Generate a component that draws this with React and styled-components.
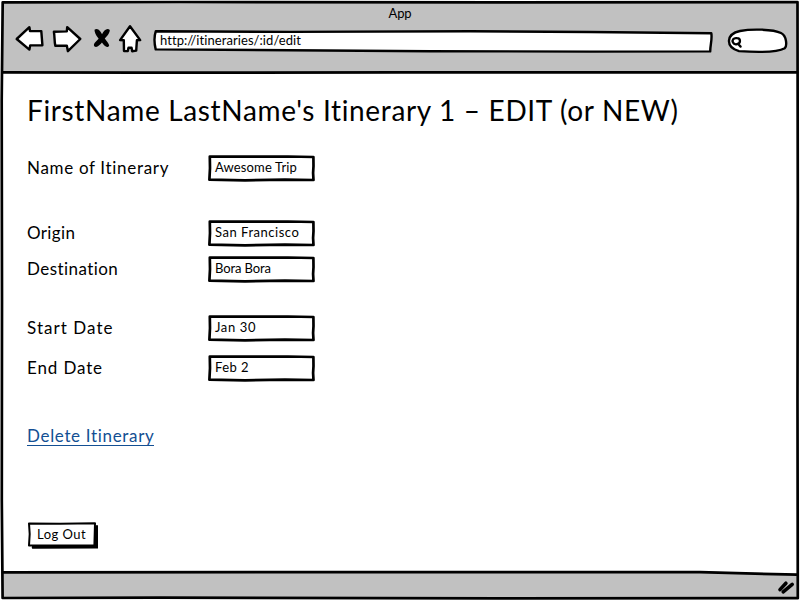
import React from 'react';
import styled, { createGlobalStyle } from 'styled-components';

const GlobalStyle = createGlobalStyle`
  *, *::before, *::after { box-sizing: border-box; }
  body { margin: 0; background: #fff; color: #000; font-family: Lato, "Open Sans", sans-serif; }
`;

const Window = styled.div`
  position: relative;
  display: flex;
  flex-direction: column;
  width: 800px;
  height: 600px;
  padding: 2px;
  overflow: hidden;
`;

const Sketch = styled.svg`
  position: absolute;
  inset: 0;
  width: 100%;
  height: 100%;
  overflow: visible;
  pointer-events: none;
  fill: none;
  stroke: #000;
  stroke-width: ${(p) => p.$weight || 3};
  stroke-linejoin: round;
  stroke-linecap: round;
`;

const Header = styled.header`
  flex: 0 0 71px;
  background: #c1c1c1;
`;

const TitleBar = styled.div`
  height: 24px;
  text-align: center;
  font-size: 13px;
  line-height: 22px;
  letter-spacing: -0.1px;
`;

const Toolbar = styled.div`
  display: flex;
  align-items: flex-start;
  height: 34px;
  padding-left: 12px;
`;

const Icons = styled.svg`
  flex: none;
  width: 130px;
  height: 34px;
  margin-right: 8px;
  overflow: visible;
  fill: #fff;
  stroke: #000;
  stroke-width: 2.4;
  stroke-linejoin: round;
  stroke-linecap: round;
`;

const AddressBar = styled.div`
  position: relative;
  flex: none;
  width: 562px;
  height: 24px;
  margin: 3px 13px 0 0;
`;

const Address = styled.span`
  position: relative;
  display: block;
  padding-left: 8px;
  font-size: 13px;
  line-height: 23px;
  letter-spacing: 0.07px;
`;

const SearchBox = styled.div`
  position: relative;
  flex: none;
  width: 62px;
  height: 26px;
  margin-top: 2px;
`;

const Page = styled.main`
  flex: 1;
  display: flex;
  flex-direction: column;
  align-items: flex-start;
  padding: 17px 25px 0;
`;

const Heading = styled.h1`
  margin: 0 0 25px;
  font-size: 28px;
  font-weight: 400;
  line-height: 40px;
  letter-spacing: 0.66px;
  white-space: nowrap;
`;

const Row = styled.div`
  display: flex;
  height: 26px;
  margin-bottom: ${(p) => p.$gap}px;
`;

const Label = styled.label`
  width: 181px;
  font-size: 17px;
  line-height: 25px;
  letter-spacing: ${(p) => p.$tracking}px;
`;

const Field = styled.div`
  position: relative;
  width: 107px;
  height: 26px;
`;

const Value = styled.span`
  position: relative;
  display: block;
  padding-left: 7px;
  font-size: 13px;
  line-height: 25px;
  letter-spacing: ${(p) => p.$tracking}px;
  white-space: nowrap;
`;

const DeleteLink = styled.a`
  height: 20px;
  margin-bottom: 76px;
  border-bottom: 1px solid #134f93;
  color: #134f93;
  font-size: 17px;
  line-height: 20px;
  letter-spacing: 0.67px;
  text-decoration: none;
`;

const LogOut = styled.button`
  position: relative;
  width: 71px;
  height: 27px;
  padding: 0 0 0 10px;
  border: 0;
  background: none;
  color: #000;
  font: 13px/25px Lato, "Open Sans", sans-serif;
  letter-spacing: 0.48px;
  text-align: left;
`;

const ButtonText = styled.span`
  position: relative;
  display: block;
  height: 27px;
`;

const Footer = styled.footer`
  flex: 0 0 27px;
  background: #c1c1c1;
  clip-path: polygon(0 0, 86% 0, 100% 3px, 100% 100%, 0 100%);
`;

function NavIcons() {
  return (
    <Icons viewBox="14 24 130 34">
      <path d="M16.7 37 29.4 25.2 30 29 41.3 29.1 42.4 43.2 30.2 43.4 29.4 47.6Z" />
      <path d="M53.9 29.7 66.8 29.4 67.2 25.1 80.3 37 67.9 49.2 66.8 43.6 55.3 43.8C54.3 39 54.7 34 53.9 29.7Z" />
      <g fill="#000" stroke="none">
        <path d="M94.5 27.8C98 25.3 101 30 102.4 33.2 104.5 36.8 108.8 40.8 109.2 43.4 107.5 46.8 104 43.8 101.8 40.2 98.8 37 94.6 32.5 94.5 27.8Z" />
        <path d="M109.8 28C109.8 31.5 106.5 34.6 104.4 37 102.5 39.5 100.5 43.8 96 45 93.6 44.6 93.4 42.6 94.8 40.8 97.8 37.4 100.2 35.5 102 32.3 103.8 28.5 107 25.6 109.8 28Z" />
      </g>
      <path d="M130 24.2 140.2 38.1 136.9 38.3 136.2 48.6 132.1 49.2 131.6 45.8 128.5 45.8 127.8 49.1 124 49 123.8 38.3 120.1 38.1Z" />
    </Icons>
  );
}

function TextField({ children, tracking }) {
  return (
    <Field>
      <Sketch viewBox="208 155 107 26" $weight="2.7">
        <path d="M209.8 156.5 250 156.7 288 156.5 313.4 157 313.5 166 313.1 173 313.5 180 285 179.7 245 180.3 209.4 179.6 210 168Z" fill="#fff" />
      </Sketch>
      <Value $tracking={tracking}>{children}</Value>
    </Field>
  );
}

const rows = [
  ['Name of Itinerary', 0.68, 'Awesome Trip', 0.14, 39],
  ['Origin', 0.36, 'San Francisco', 0.52, 10],
  ['Destination', 0.44, 'Bora Bora', -0.1, 33],
  ['Start Date', 1.04, 'Jan 30', 0.63, 14],
  ['End Date', 0.86, 'Feb 2', 0.45, 45],
];

export default function App() {
  return (
    <>
      <GlobalStyle />
      <Window>
        <Header>
          <TitleBar>App</TitleBar>
          <Toolbar>
            <NavIcons />
            <AddressBar>
              <Sketch viewBox="152 29 562 24" $weight="2.4">
                <path d="M155.8 31.2 290 31.9 470 31.2 590 32 711.3 33.3C712.4 39 710.2 45 710.2 51.4L590 51.6 430 51.2 290 50.3 155.7 49.4C153.9 42 154.2 36 155.8 31.2Z" fill="#fff" />
              </Sketch>
              <Address>http://itineraries/:id/edit</Address>
            </AddressBar>
            <SearchBox>
              <Sketch viewBox="727 28 62 26" $weight="2.4">
                <path d="M740 31C751 28.8 773 29 781 33 787 36 787 46 784.8 48.2 775 53.5 749 51.8 739 51.1 725 47 726 34 740 31Z" fill="#fff" />
                <path d="M737.2 38.2C733.2 37.6 731.8 40 733 42.6 734.5 45.8 740 44.2 740 41 739.9 39 738.8 38.2 737.2 38.2ZM738.2 44 740.6 46.6" strokeWidth="2.3" />
              </Sketch>
            </SearchBox>
          </Toolbar>
        </Header>
        <Page>
          <Heading>FirstName LastName's Itinerary 1 – EDIT (or NEW)</Heading>
          {rows.map(([label, labelTracking, value, valueTracking, gap]) => (
            <Row key={label} $gap={gap}>
              <Label $tracking={labelTracking}>{label}</Label>
              <TextField tracking={valueTracking}>{value}</TextField>
            </Row>
          ))}
          <DeleteLink>Delete Itinerary</DeleteLink>
          <LogOut>
            <Sketch viewBox="27 522 71 27" $weight="2">
              <path d="M95.5 525.3H98V548.6H32V546H94Z" fill="#000" stroke="none" />
              <path d="M29 523.4 60 523.7 95 523.2 94.4 545.3 60 545.6 29 545.4 29.7 534Z" fill="#fff" />
              <path d="M33 547.2 96 546.8 96.4 527" strokeWidth="2.6" />
            </Sketch>
            <ButtonText>Log Out</ButtonText>
          </LogOut>
        </Page>
        <Footer />
        <Sketch viewBox="0 0 800 600" $weight="2.7">
          <path d="M2.7 2.3 180 2 500 2.4 797.5 2 797.8 200 797.5 400 797.8 598.2 500 598.3 160 597.7 2.6 598 1.8 500 2 300 1.7 100Z" />
          <path d="M3 72.3 140 72.7 400 72.4 797 72.4M3 572.3 300 572.2 520 572.1 700 572.2 797 574.7" />
          <path d="M780 589.6 785.9 583.2M783.2 591.8 792.2 584.3" strokeWidth="3.6" />
        </Sketch>
      </Window>
    </>
  );
}
